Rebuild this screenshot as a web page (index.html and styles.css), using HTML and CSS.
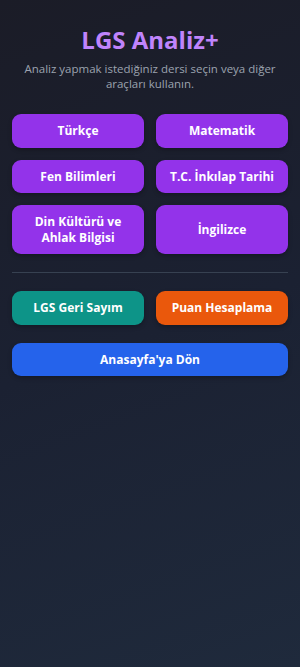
FILE: index.html
```html
<!DOCTYPE html>
<html lang="tr">
<head>
  <meta charset="utf-8" />
  <meta name="viewport" content="width=device-width, initial-scale=1" />
  <title>LGS Analiz+</title>
  <link rel="stylesheet" href="styles.css">
</head>
<body>
  <main class="app">
    <header class="head">
      <h1>LGS Analiz+</h1>
      <p class="sub">Analiz yapmak istediğiniz dersi seçin veya diğer araçları kullanın.</p>
    </header>

    <div class="grid">
      <button class="btn purple">Türkçe</button>
      <button class="btn purple">Matematik</button>
      <button class="btn purple">Fen Bilimleri</button>
      <button class="btn purple">T.C. İnkılap Tarihi</button>
      <button class="btn purple">Din Kültürü ve Ahlak Bilgisi</button>
      <button class="btn purple">İngilizce</button>
    </div>

    <hr class="sep" />

    <div class="grid">
      <button class="btn teal">LGS Geri Sayım</button>
      <button class="btn orange">Puan Hesaplama</button>
    </div>

    <button class="btn blue wide">Anasayfa'ya Dön</button>
  </main>
</body>
</html>
```

FILE: styles.css
```css
:root{
  --purple: #9333ea;
  --teal: #0d9488;
  --orange: #ea580c;
  --blue: #2563eb;
  --title: #c084fc;
  --muted: #9ca3af;
  --line: #374151;
}
html, body { height: 100%; }
body{
  margin: 0;
  font-family: "Open Sans", "Noto Sans", sans-serif;
  background: linear-gradient(160deg, #1b1c27 0%, #1b2132 50%, #1f2a3c 100%);
  color: #fff;
}
.app{ padding: 25px 12px 24px; }

.head{ text-align: center; margin-bottom: 23px; }
.head h1{
  margin: 0;
  font-size: 24px; line-height: 30px; font-weight: 700;
  color: var(--title);
}
.sub{
  margin: 6px 4px 0;
  font-size: 11.5px; line-height: 15px;
  color: var(--muted);
}

.grid{ display: grid; grid-template-columns: 1fr 1fr; gap: 12px; }

.btn{
  border: 0; border-radius: 9px; cursor: pointer;
  padding: 9px 12px; min-height: 33.5px;
  font-family: inherit; font-size: 12px; line-height: 15.5px; font-weight: 700;
  color: #fff;
  box-shadow: 0 2px 4px rgba(0,0,0,.25);
}
.btn.purple{ background: var(--purple); }
.btn.teal{ background: var(--teal); }
.btn.orange{ background: var(--orange); }
.btn.blue{ background: var(--blue); }
.btn.wide{ display: block; width: 100%; margin-top: 18px; }

.sep{ border: 0; border-top: 1px solid var(--line); margin: 18px 0; }
```
